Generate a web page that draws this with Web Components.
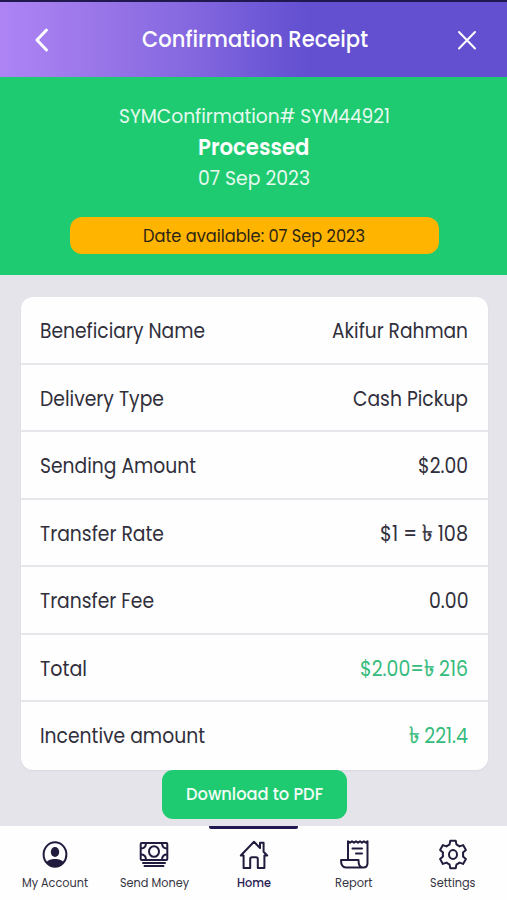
<!DOCTYPE html>
<html lang="en">
<head>
<meta charset="utf-8">
<title>Confirmation Receipt</title>
<style>
body { margin: 0; font-family: Poppins, Inter, "Noto Sans", sans-serif; color: #302f3b; background: #e5e4ea; }
</style>
</head>
<body>
<receipt-app></receipt-app>
<script>
const define = (name, html, setup) => {
  const template = document.createElement('template');
  template.innerHTML = html;
  customElements.define(name, class extends HTMLElement {
    constructor() {
      super();
      this.attachShadow({ mode: 'open' }).append(template.content.cloneNode(true));
    }
    connectedCallback() { if (setup) setup(this, this.shadowRoot); }
  });
};

/* A line of text condensed horizontally to the width in its "w" attribute. */
define('fit-text', `<style>:host{display:block;white-space:nowrap;line-height:1.2}span{display:inline-block;transform-origin:0 50%}</style><span><slot></slot></span>`, (host, root) => {
  const fit = () => {
    const span = root.querySelector('span');
    const w = Number(host.getAttribute('w'));
    host.style.width = w + 'px';
    if (span.offsetWidth) {
      span.style.transform = 'none';
      span.style.transform = 'scaleX(' + w / span.getBoundingClientRect().width + ')';
    }
  };
  fit();
  requestAnimationFrame(fit);
  document.fonts.ready.then(fit);
});

define('top-bar', `
<style>
:host{box-sizing:border-box;height:77px;padding:0 28px 0 27px;border-top:2px solid #21184f;display:flex;align-items:center;justify-content:space-between;color:#fff;font-size:22.5px;font-weight:500;
background:linear-gradient(90deg,#ae84f5 0,#9b77e9 18%,#8467df 38%,#6e58d6 52%,#6250d0 61%,#6250d0 100%)}
svg{display:block;fill:none;stroke:#fff;stroke-linecap:round;stroke-linejoin:round}
</style>
<svg width="28" height="28" viewBox="0 0 28 28" stroke-width="3"><path d="M19.5 4 10 14l9.500 10"/></svg>
<fit-text w="226"><slot></slot></fit-text>
<svg width="24" height="24" viewBox="0 0 24 24" stroke-width="2"><path d="M4 4l16 16.500M20 4 4 20.500"/></svg>`);

define('status-banner', `
<style>
:host{box-sizing:border-box;height:198px;background:#1fcb71;color:#fff;display:flex;flex-direction:column;align-items:center;padding:26px 0 0 1px}
.id,.date{font-size:20px;line-height:26px;color:#e6f9ef}
.state{font-size:22.5px;font-weight:600;line-height:28px;margin:4px 0 4px}
.pill{box-sizing:border-box;width:369px;height:37px;margin-top:26px;padding-top:1px;border-radius:12px;background:#ffb400;color:#2c2414;font-size:17.5px;display:flex;align-items:center;justify-content:center}
</style>
<fit-text class="id" w="271">SYMConfirmation# SYM44921</fit-text>
<fit-text class="state" w="111.5">Processed</fit-text>
<fit-text class="date" w="112">07 Sep 2023</fit-text>
<div class="pill"><fit-text w="222">Date available: 07 Sep 2023</fit-text></div>`);

define('receipt-row', `
<style>
:host{box-sizing:border-box;display:flex;flex:none;height:67.500px;align-items:center;justify-content:space-between;padding:4px 20px 0 19px;border-bottom:2px solid #e7e6ea;font-size:20.500px}
:host(:last-child){border-bottom-color:transparent}
:host([paid]) .value{color:#35bb7c}
.taka{font-size:1.1em;line-height:0;-webkit-text-stroke:.4px currentColor}
</style>
<fit-text class="label"></fit-text><fit-text class="value"></fit-text>`, (host, root) => {
  for (const part of ['label', 'value']) {
    const text = root.querySelector('.' + part);
    text.innerHTML = host.getAttribute(part).replace('৳', '<span class="taka">৳</span>');
    text.setAttribute('w', host.getAttribute(part + '-w'));
    text.connectedCallback();
  }
});

define('receipt-card', `
<style>:host{box-sizing:border-box;display:flex;flex-direction:column;width:467px;height:473px;margin:22px 0 0 21px;background:#fefefe;border-radius:12px;box-shadow:0 1px 2px #0000000d}</style><slot></slot>`);

define('action-button', `
<style>
:host{display:block}
button{display:flex;align-items:center;justify-content:center;width:185px;height:49px;margin:0 0 0 162px;padding:0 0 2px;border:0;border-radius:11px;background:#1fcb71;color:#f2fcf6;font:500 18px Poppins,Inter,sans-serif}
</style><button><fit-text w="137"><slot></slot></fit-text></button>`);

define('nav-item', `
<style>
:host{box-sizing:border-box;flex:1;display:flex;flex-direction:column;align-items:center;padding-top:12px;font-size:12px;color:#353442;position:relative}
:host([active]){color:#292052;font-weight:500}
:host([active])::before{content:"";position:absolute;top:0;left:50%;width:89px;height:3px;margin-left:-44.500px;background:#21184f;border-radius:0 0 2px 2px}
fit-text{margin-top:6px}
</style><slot name="icon"></slot><fit-text></fit-text>`, (host, root) => {
  const text = root.querySelector('fit-text');
  text.textContent = host.getAttribute('label');
  text.setAttribute('w', host.getAttribute('w'));
  text.connectedCallback();
});

define('tab-bar', `
<style>
:host{display:flex;height:74px;margin-top:7px;padding:0 4px 0 5px;background:#fefefe}
svg{display:block;flex:none;width:32px;height:32px;fill:none;stroke:#211c3d;stroke-width:2;stroke-linecap:round;stroke-linejoin:round}
</style>
<nav-item label="My Account" w="66"><svg slot="icon" viewBox="0 0 32 32"><clipPath id="disc"><ellipse cx="16" cy="16.500" rx="11.500" ry="12"/></clipPath><g clip-path="url(#disc)" fill="#211c3d" stroke="none"><ellipse cx="16" cy="14" rx="4.200" ry="5"/><path d="M6.500 29v-3.500c2-3.600 5.500-4.500 9.500-4.500s7.500.9 9.500 4.500V29z"/></g><ellipse cx="16" cy="16.500" rx="11.400" ry="12.200"/></svg></nav-item>
<nav-item label="Send Money" w="69"><svg slot="icon" viewBox="0 0 32 32"><rect x="2.700" y="5" width="26.600" height="17" rx="1"/><ellipse cx="16" cy="13.500" rx="5" ry="5.300"/><path d="M3 10.500c3 0 4.800-2 5-5M29 10.500c-3 0-4.800-2-5-5M3 16.500c3 0 4.800 2 5 5M29 16.500c-3 0-4.800 2-5 5M5 25h22M6.500 28h19"/></svg></nav-item>
<nav-item label="Home" w="34" active><svg slot="icon" viewBox="0 0 32 32"><path d="M2.800 17.500 16 3.800l6 6.200V4.800h3.600v9l3.600 3.700h-2.800V30h-6.600V21c0-1.200-.6-1.800-1.800-1.800h-4c-1.200 0-1.800.6-1.800 1.800v9H5.600V17.500z"/></svg></nav-item>
<nav-item label="Report" w="37.500"><svg slot="icon" viewBox="0 0 32 32"><path d="M10 21.500V3.200l2 1.500 2-1.500 2 1.500 2-1.500 2 1.500 2-1.500 2 1.500 2-1.500 2 1.500 1.500-1.500V25c0 3-1.500 4.500-4.200 4.500H8c-3.500 0-5-3-5-7.500h17.500c0 4.500 1.200 7.500 4.200 7.500M14.500 10.500H24M18 15.500h6"/></svg></nav-item>
<nav-item label="Settings" w="45.500"><svg slot="icon" viewBox="0 0 32 32"><ellipse cx="16" cy="16.500" rx="4" ry="4.400"/><path d="M13.300 2.800h5.400l.8 3.800q1.600.7 3 1.800l3.600-1.300 2.800 4.900-2.900 2.600q.3 1.900 0 3.800l2.900 2.600-2.800 4.900-3.600-1.300q-1.400 1.100-3 1.800l-.8 3.800h-5.400l-.8-3.800q-1.600-.7-3-1.800l-3.600 1.300L3.100 21 6 18.400q-.3-1.900 0-3.800L3.100 12l2.800-4.900 3.600 1.300q1.400-1.100 3-1.800z"/></svg></nav-item>`);

define('receipt-app', `
<style>:host{display:block;width:507px;height:900px;overflow:hidden}</style>
<top-bar>Confirmation Receipt</top-bar>
<status-banner></status-banner>
<receipt-card>
<receipt-row label="Beneficiary Name" label-w="165" value="Akifur Rahman" value-w="136"></receipt-row>
<receipt-row label="Delivery Type" label-w="124" value="Cash Pickup" value-w="115"></receipt-row>
<receipt-row label="Sending Amount" label-w="156" value="$2.00" value-w="50"></receipt-row>
<receipt-row label="Transfer Rate" label-w="124" value="$1 = ৳ 108" value-w="88"></receipt-row>
<receipt-row label="Transfer Fee" label-w="114" value="0.00" value-w="39.5"></receipt-row>
<receipt-row label="Total" label-w="47" value="$2.00=৳ 216" value-w="108" paid></receipt-row>
<receipt-row label="Incentive amount" label-w="165" value="৳ 221.4" value-w="59" paid></receipt-row>
</receipt-card>
<action-button>Download to PDF</action-button>
<tab-bar></tab-bar>`);
</script>
</body>
</html>
